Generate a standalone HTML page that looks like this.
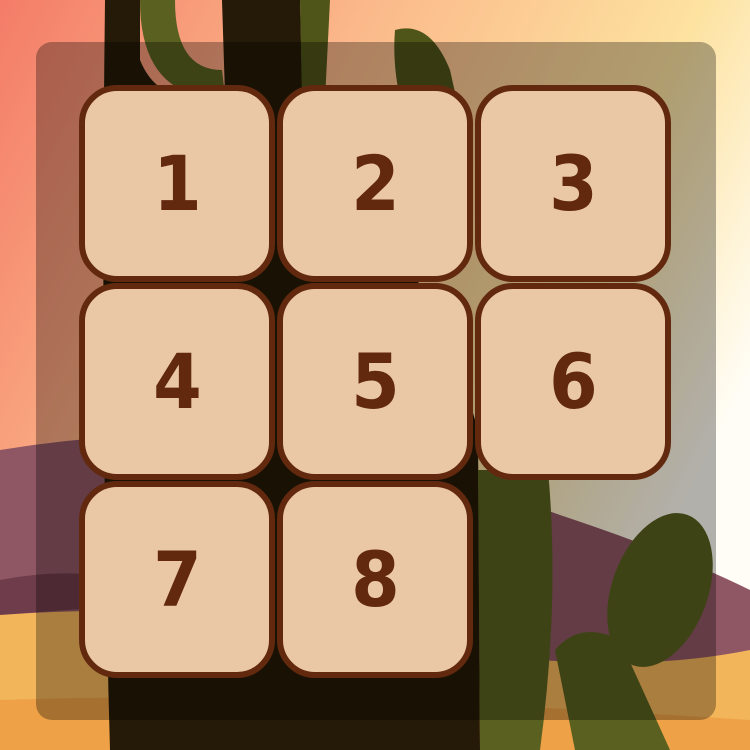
<!DOCTYPE html>
<html><head><meta charset="utf-8"><style>
html,body{margin:0;padding:0;width:750px;height:750px;overflow:hidden}
#bg{position:absolute;left:0;top:0}
.panel{position:absolute;left:36px;top:42px;width:680px;height:678px;border-radius:16px;background:rgba(0,0,0,0.3)}
.t{position:absolute;width:184px;height:185px;border:6px solid #62290f;border-radius:38px;background:#ebc8a5;box-sizing:content-box;
font-family:"DejaVu Sans","Liberation Sans",sans-serif;font-weight:bold;font-size:76px;color:#62290f;display:flex;align-items:center;justify-content:center}
.t span{display:inline-block;transform:scaleX(0.92)}
</style></head><body>
<svg id="bg" width="750" height="750" viewBox="0 0 750 750">
<defs>
<linearGradient id="sky" x1="0" y1="0" x2="1" y2="0.5">
<stop offset="0" stop-color="#f47c68"/><stop offset="0.4" stop-color="#fbb98a"/><stop offset="0.75" stop-color="#fde2a0"/><stop offset="1" stop-color="#fffdf5"/>
</linearGradient>
</defs>
<rect width="750" height="750" fill="url(#sky)"/>
<path d="M0 450 Q150 425 300 440 Q420 465 560 515 Q680 555 750 590 L750 750 L0 750Z" fill="#8f5763"/>
<path d="M0 580 Q100 560 200 600 L0 615Z" fill="#6e3c4a"/>
<path d="M0 615 Q200 600 400 640 Q600 680 750 650 L750 750 L0 750Z" fill="#f3b55a"/>
<path d="M0 700 Q300 690 750 720 L750 750 L0 750Z" fill="#eea146"/>
<path d="M105 0 L140 0 L140 60 Q160 110 225 95 L222 0 L300 0 L305 200 Q380 250 440 300 L478 430 L480 750 L110 750 Q100 400 105 0Z" fill="#241a07"/>
<path d="M140 0 Q140 80 195 95 L225 95 L222 70 Q175 70 175 0Z" fill="#5a6020"/>
<path d="M300 0 L330 0 L325 100 L302 100Z" fill="#4f5418"/>
<path d="M395 30 Q430 20 450 70 L470 160 L420 160 Q390 90 395 30Z" fill="#4f5418"/>
<path d="M478 470 L548 470 Q560 600 540 750 L480 750Z" fill="#5a6020"/>
<ellipse cx="660" cy="590" rx="48" ry="80" transform="rotate(20 660 590)" fill="#5a6020"/>
<path d="M555 650 Q580 620 620 640 L670 750 L575 750Z" fill="#5a6020"/>
</svg>
<div class="panel"></div>
<div class="t" style="left:79px;top:85px"><span>1</span></div>
<div class="t" style="left:277px;top:85px"><span>2</span></div>
<div class="t" style="left:475px;top:85px"><span>3</span></div>
<div class="t" style="left:79px;top:283px"><span>4</span></div>
<div class="t" style="left:277px;top:283px"><span>5</span></div>
<div class="t" style="left:475px;top:283px"><span>6</span></div>
<div class="t" style="left:79px;top:481px"><span>7</span></div>
<div class="t" style="left:277px;top:481px"><span>8</span></div>
</body></html>
